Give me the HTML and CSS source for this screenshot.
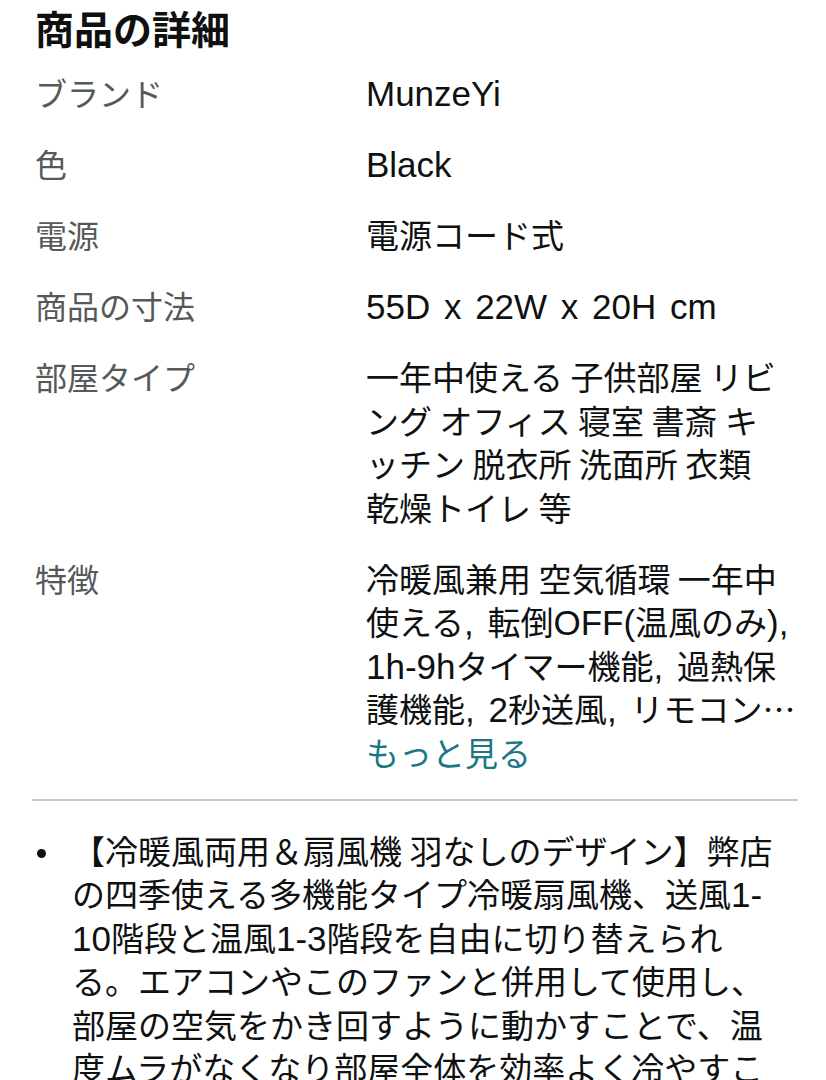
FILE: index.html
```html
<!DOCTYPE html>
<html lang="ja">
<head>
<meta charset="utf-8">
<link rel="stylesheet" href="styles.css">
</head>
<body>
<div class="page">
  <h2 class="title">商品の詳細</h2>
  <div class="specs">
    <div class="label">ブランド</div><div class="value"><span class="en">MunzeYi</span></div>
    <div class="label">色</div><div class="value"><span class="en">Black</span></div>
    <div class="label">電源</div><div class="value">電源コード式</div>
    <div class="label">商品の寸法</div><div class="value"><span class="en">55D x 22W x 20H cm</span></div>
    <div class="label">部屋タイプ</div>
    <div class="value">一年中使える 子供部屋 リビ<br>ング オフィス 寝室 書斎 キ<br>ッチン 脱衣所 洗面所 衣類<br>乾燥トイレ 等</div>
    <div class="label">特徴</div>
    <div class="value">
      <div>冷暖風兼用 空気循環 一年中<br>使える<span class="en">, </span>転倒<span class="en">OFF(</span>温風のみ<span class="en">),</span><br><span class="en">1h-9h</span>タイマー機能<span class="en">, </span>過熱保<br>護機能<span class="en">, 2</span>秒送風<span class="en">, </span>リモコン…</div>
      <a class="more" href="#">もっと見る</a>
    </div>
  </div>
  <hr class="sep">
  <ul class="bullets">
    <li><span class="btext">【冷暖風両用＆扇風機 羽なしのデザイン】弊店<br>の四季使える多機能タイプ冷暖扇風機、送風<span class="en">1-</span><br><span class="en">10</span>階段と温風<span class="en">1-3</span>階段を自由に切り替えられ<br>る。エアコンやこのファンと併用して使用し、<br>部屋の空気をかき回すように動かすことで、温<br>度ムラがなくなり部屋全体を効率よく冷やすこ<br>とができます。</span></li>
  </ul>
</div>
</body>
</html>
```
FILE: styles.css
```css
html, body {
  margin: 0;
  padding: 0;
  background: #ffffff;
}
body {
  font-family: "Noto Sans CJK JP", "Noto Sans", sans-serif;
  color: #0f1111;
}
.page {
  padding: 1px 20px 0 35px;
}
.title {
  margin: 0;
  font-size: 39px;
  line-height: 52px;
  font-weight: 700;
  color: #0f1111;
}
.specs {
  display: grid;
  grid-template-columns: 331px 1fr;
  row-gap: 27.5px;
  margin-top: 18px;
  font-size: 32px;
  line-height: 43.5px;
  white-space: nowrap;
}
.label {
  color: #565959;
}
.value {
  color: #0f1111;
  font-size: 33px;
}
.en {
  font-family: "Liberation Sans", Arial, sans-serif;
  font-size: 35px;
  line-height: 20px;
  word-spacing: 4px;
}
.more {
  display: block;
  color: #1a7785;
  text-decoration: none;
}
.sep {
  border: 0;
  border-top: 2px solid #c9c9c9;
  margin: 25px 8px 0 -3px;
}
.bullets {
  list-style: none;
  margin: 28px 0 0;
  padding: 0;
  font-size: 33px;
  line-height: 43.4px;
  white-space: nowrap;
}
.bullets li {
  display: flex;
  align-items: flex-start;
}
.bullets li::before {
  content: "";
  flex: none;
  width: 9px;
  height: 9px;
  border-radius: 50%;
  background: #0f1111;
  margin: 20px 26px 0 2px;
}
```
